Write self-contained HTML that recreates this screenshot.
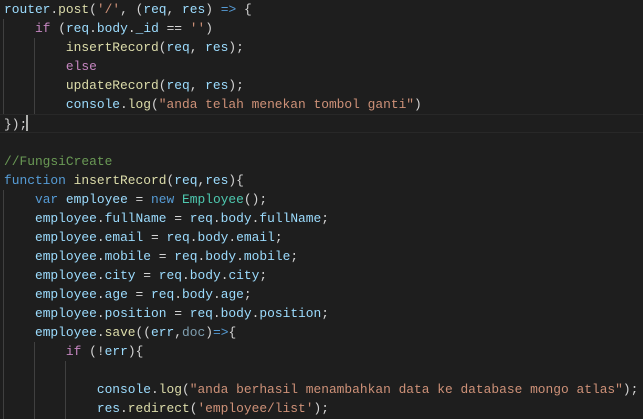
<!DOCTYPE html>
<html><head><style>
html,body{margin:0;padding:0;background:#1e1e1e;width:643px;height:419px;overflow:hidden}
pre{margin:0;padding:0 0 0 4px;font-family:"Liberation Mono",monospace;font-size:12.9px;line-height:19px;color:#d4d4d4;position:relative}
.l{display:block;height:19px;white-space:pre;position:relative}
.cur{border-top:1px solid #282828;border-bottom:1px solid #282828;height:17px;line-height:17px;margin-left:-4px;padding-left:4px}
.v{color:#9cdcfe}.f{color:#dcdcaa}.k{color:#c586c0}.b{color:#569cd6}.c{color:#4ec9b0}.s{color:#ce9178}.g{color:#6a9955}
.y,.p,.u{color:#d4d4d4}.d{color:#7f9fb0}
.ig{position:absolute;width:1px;background:#404040}
.caret{display:inline-block;width:2px;height:16px;background:#aeafad;vertical-align:-3px;margin-left:-1px}
</style></head><body>
<div class="ig" style="left:3px;top:19px;height:95px"></div>
<div class="ig" style="left:34px;top:38px;height:76px"></div>
<div class="ig" style="left:3px;top:190px;height:229px"></div>
<div class="ig" style="left:34px;top:342px;height:77px"></div>
<div class="ig" style="left:65px;top:361px;height:58px"></div>
<pre><span class="l"><span class="v">router</span>.<span class="f">post</span><span class="y">(</span><span class="s">'/'</span>, <span class="p">(</span><span class="v">req</span>, <span class="v">res</span><span class="p">)</span> <span class="b">=&gt;</span> <span class="p">{</span></span><span class="l">    <span class="k">if</span> <span class="u">(</span><span class="v">req</span>.<span class="v">body</span>.<span class="v">_id</span> == <span class="s">''</span><span class="u">)</span></span><span class="l">        <span class="f">insertRecord</span><span class="u">(</span><span class="v">req</span>, <span class="v">res</span><span class="u">)</span>;</span><span class="l">        <span class="k">else</span></span><span class="l">        <span class="f">updateRecord</span><span class="u">(</span><span class="v">req</span>, <span class="v">res</span><span class="u">)</span>;</span><span class="l">        <span class="v">console</span>.<span class="f">log</span><span class="u">(</span><span class="s">"anda telah menekan tombol ganti"</span><span class="u">)</span></span><span class="l cur"><span class="p">}</span><span class="y">)</span>;<span class="caret"></span></span><span class="l"> </span><span class="l"><span class="g">//FungsiCreate</span></span><span class="l"><span class="b">function</span> <span class="f">insertRecord</span><span class="y">(</span><span class="v">req</span>,<span class="v">res</span><span class="y">)</span><span class="y">{</span></span><span class="l">    <span class="b">var</span> <span class="v">employee</span> = <span class="b">new</span> <span class="c">Employee</span><span class="p">()</span>;</span><span class="l">    <span class="v">employee</span>.<span class="v">fullName</span> = <span class="v">req</span>.<span class="v">body</span>.<span class="v">fullName</span>;</span><span class="l">    <span class="v">employee</span>.<span class="v">email</span> = <span class="v">req</span>.<span class="v">body</span>.<span class="v">email</span>;</span><span class="l">    <span class="v">employee</span>.<span class="v">mobile</span> = <span class="v">req</span>.<span class="v">body</span>.<span class="v">mobile</span>;</span><span class="l">    <span class="v">employee</span>.<span class="v">city</span> = <span class="v">req</span>.<span class="v">body</span>.<span class="v">city</span>;</span><span class="l">    <span class="v">employee</span>.<span class="v">age</span> = <span class="v">req</span>.<span class="v">body</span>.<span class="v">age</span>;</span><span class="l">    <span class="v">employee</span>.<span class="v">position</span> = <span class="v">req</span>.<span class="v">body</span>.<span class="v">position</span>;</span><span class="l">    <span class="v">employee</span>.<span class="f">save</span><span class="p">(</span><span class="u">(</span><span class="v">err</span>,<span class="d">doc</span><span class="u">)</span><span class="b">=&gt;</span><span class="u">{</span></span><span class="l">        <span class="k">if</span> <span class="y">(</span>!<span class="v">err</span><span class="y">){</span></span><span class="l"> </span><span class="l">            <span class="v">console</span>.<span class="f">log</span><span class="p">(</span><span class="s">"anda berhasil menambahkan data ke database mongo atlas"</span><span class="p">)</span>;</span><span class="l">            <span class="v">res</span>.<span class="f">redirect</span><span class="p">(</span><span class="s">'employee/list'</span><span class="p">)</span>;</span></pre>
</body></html>
